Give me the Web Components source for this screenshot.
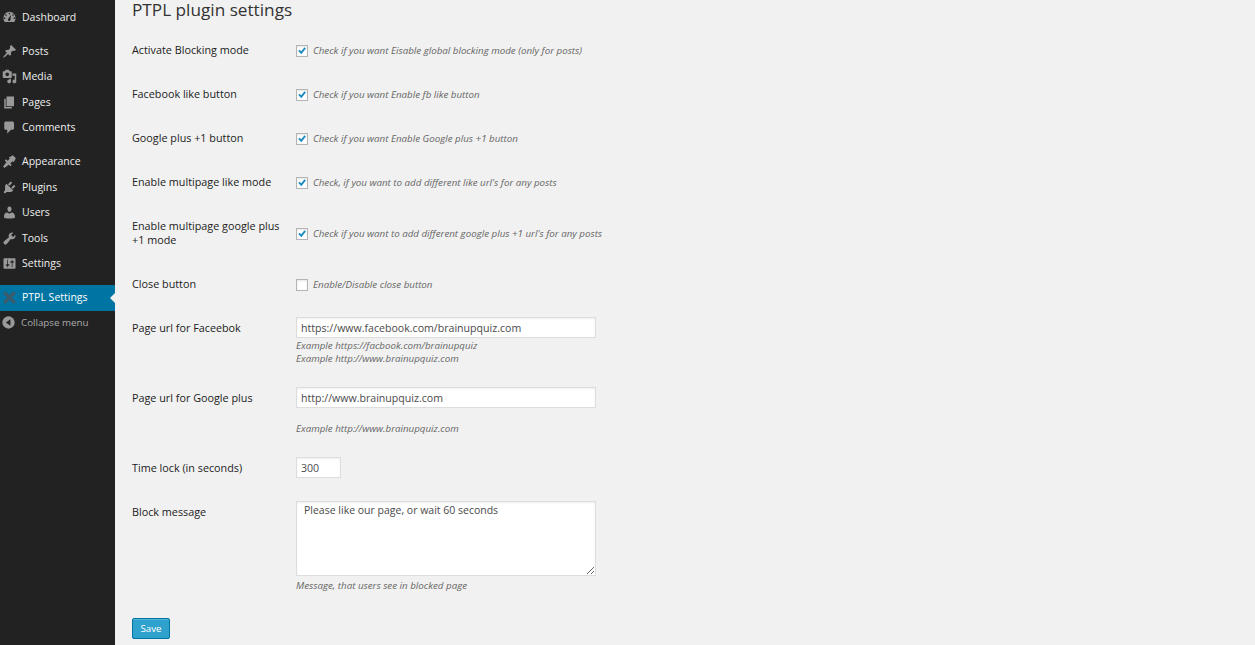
<!DOCTYPE html>
<html lang="en"><head><meta charset="utf-8"><title>PTPL plugin settings</title>
<style>
html,body{margin:0;height:100%;background:#f1f1f1;overflow:hidden}
body{font-family:"Open Sans",sans-serif;font-size:10.5px;color:#444}
</style></head>
<body>
<wp-shell>
  <wp-sidebar slot="side">
    <wp-item icon="dashboard" style="margin-top:4.5px">Dashboard</wp-item>
    <wp-sep></wp-sep>
    <wp-item icon="posts">Posts</wp-item>
    <wp-item icon="media">Media</wp-item>
    <wp-item icon="pages">Pages</wp-item>
    <wp-item icon="comments">Comments</wp-item>
    <wp-sep></wp-sep>
    <wp-item icon="appearance">Appearance</wp-item>
    <wp-item icon="plugins">Plugins</wp-item>
    <wp-item icon="users">Users</wp-item>
    <wp-item icon="tools">Tools</wp-item>
    <wp-item icon="settings">Settings</wp-item>
    <wp-sep></wp-sep>
    <wp-item icon="cross" current>PTPL Settings</wp-item>
    <wp-collapse>Collapse menu</wp-collapse>
  </wp-sidebar>
  <ptpl-settings>
    <set-row label="Activate Blocking mode" h="44"><set-check checked>Check if you want Eisable global blocking mode (only for posts)</set-check></set-row>
    <set-row label="Facebook like button" h="44"><set-check checked>Check if you want Enable fb like button</set-check></set-row>
    <set-row label="Google plus +1 button" h="44"><set-check checked>Check if you want Enable Google plus +1 button</set-check></set-row>
    <set-row label="Enable multipage like mode" h="44"><set-check checked>Check, if you want to add different like url's for any posts</set-check></set-row>
    <set-row label="Enable multipage google plus +1 mode" h="58"><set-check checked style="margin-top:12px">Check if you want to add different google plus +1 url's for any posts</set-check></set-row>
    <set-row label="Close button" h="44"><set-check>Enable/Disable close button</set-check></set-row>
    <set-row label="Page url for Faceebok" h="70"><set-text value="https://www.facebook.com/brainupquiz.com" w="300"></set-text><set-desc style="margin-top:1px">Example https://facbook.com/brainupquiz</set-desc><set-desc>Example http://www.brainupquiz.com</set-desc></set-row>
    <set-row label="Page url for Google plus" h="70"><set-text value="http://www.brainupquiz.com" w="300"></set-text><set-desc style="margin-top:14px">Example http://www.brainupquiz.com</set-desc></set-row>
    <set-row label="Time lock (in seconds)" h="44"><set-text value="300" w="45"></set-text></set-row>
    <set-row label="Block message" h="106"><set-area>Please like our page, or wait 60 seconds</set-area><set-desc style="margin-top:3px">Message, that users see in blocked page</set-desc></set-row>
    <set-save>Save</set-save>
  </ptpl-settings>
</wp-shell>
<script>
const ICONS={
dashboard:'<path fill-rule="evenodd" d="M3.760 16h12.480C17.340 14.570 18 12.790 18 10.860c0-4.730-3.810-8.550-8-8.550s-8 3.820-8 8.550c0 1.930.66 3.710 1.760 5.140zM10 3.700a1.100 1.100 0 1 1 0 2.200 1.100 1.100 0 0 1 0-2.200zM5.300 5.700a1.100 1.100 0 1 1 0 2.200 1.100 1.100 0 0 1 0-2.200zM14.700 5.700a1.100 1.100 0 1 1 0 2.200 1.100 1.100 0 0 1 0-2.200zM3.500 9.800a1.100 1.100 0 1 1 0 2.200 1.100 1.100 0 0 1 0-2.200zM16.500 9.800a1.100 1.100 0 1 1 0 2.200 1.100 1.100 0 0 1 0-2.200zM12.300 6.200l-1 5.800a1.800 1.800 0 1 1-2.700-.8z"/>',
posts:'<path d="M10.440 3.020l1.820-1.820 6.360 6.350-1.830 1.820c-1.050-.68-2.480-.57-3.410.36l-.75.75c-.92.93-1.040 2.350-.35 3.410l-1.830 1.820-2.410-2.410-2.800 2.790c-.42.42-3.380 2.710-3.800 2.290s1.860-3.390 2.280-3.810l2.790-2.790L4.100 9.360l1.830-1.820c1.050.69 2.480.57 3.400-.36l.75-.75c.93-.92 1.050-2.350.36-3.410z"/>',
media:'<path fill-rule="evenodd" d="M13 11V4c0-.55-.45-1-1-1h-1.670L9 1H5L3.670 3H2c-.55 0-1 .45-1 1v7c0 .55.45 1 1 1h10c.55 0 1-.45 1-1zM7 4.500c1.380 0 2.500 1.120 2.500 2.500S8.380 9.500 7 9.500 4.500 8.380 4.500 7 5.620 4.500 7 4.500z"/><path d="M14 6h5v10.500c0 1.380-1.120 2.500-2.500 2.500S14 17.880 14 16.500s1.120-2.500 2.500-2.500c.17 0 .34.020.5.050V9h-3V6zm-4 8.050V13h2v3.500c0 1.380-1.120 2.500-2.500 2.500S7 17.880 7 16.500 8.120 14 9.500 14c.17 0 .34.020.5.050z"/>',
pages:'<path d="M6 15V2h10v13H6zm-1 1h8v2H3V5h2v11z"/>',
comments:'<path d="M5 2h9c1.100 0 2 .9 2 2v7c0 1.100-.9 2-2 2h-2l-5 5v-5H5c-1.100 0-2-.9-2-2V4c0-1.100.9-2 2-2z"/>',
appearance:'<path d="M9 4.500 14.500 1.500 18.500 5.500 15.500 11 14 9.500 11 12.500 13 14.500 11.200 16.300 9 14.200 3.200 18.500 1.500 16.800 5.800 11 3.700 8.800 5.500 7 7.500 9 10.500 6z"/>',
plugins:'<path d="M13.110 4.360L9.870 7.600 8 5.730l3.240-3.240c.35-.34 1.050-.2 1.560.32.520.51.660 1.210.31 1.550zm-8 1.770l.91-1.120 9.010 9.010-1.190.84c-.71.710-2.630 1.160-3.820 1.160H6.140L4.900 17.260c-.59.590-1.540.59-2.120 0-.59-.58-.59-1.530 0-2.120l1.240-1.240v-3.880c0-1.130.4-3.190 1.090-3.890zm7.260 3.970l3.240-3.240c.34-.35 1.040-.21 1.550.31.520.51.660 1.210.31 1.550l-3.240 3.250z"/>',
users:'<path d="M10 9.250c-2.270 0-2.730-3.440-2.730-3.440C7 4.020 7.820 2 9.970 2c2.160 0 2.980 2.020 2.710 3.810 0 0-.41 3.440-2.680 3.440zm0 2.570L12.720 10c2.390 0 4.520 2.330 4.520 4.530v2.490s-3.650 1.130-7.240 1.130c-3.650 0-7.240-1.130-7.240-1.130v-2.490c0-2.250 1.940-4.480 4.150-4.480z"/>',
tools:'<path d="M16.680 9.770c-1.340 1.340-3.300 1.670-4.950.99l-5.410 6.520c-.99.99-2.590.99-3.580 0s-.99-2.590 0-3.570l6.520-5.420c-.68-1.650-.35-3.610.99-4.950 1.280-1.280 3.120-1.620 4.720-1.060l-2.890 2.890 2.820 2.820 2.860-2.860c.56 1.600.22 3.440-1.080 4.640z"/>',
settings:'<path fill-rule="evenodd" d="M18 16V4c0-.55-.45-1-1-1H3c-.55 0-1 .45-1 1v12c0 .55.45 1 1 1h14c.55 0 1-.45 1-1zM8 11h1c.55 0 1 .45 1 1s-.45 1-1 1H8v1.500c0 .28-.22.5-.5.5s-.5-.22-.5-.5V13H6c-.55 0-1-.45-1-1s.45-1 1-1h1V5.500c0-.28.22-.5.5-.5s.5.22.5.5V11zm5-2h-1c-.55 0-1-.45-1-1s.45-1 1-1h1V5.500c0-.28.22-.5.5-.5s.5.22.5.5V7h1c.55 0 1 .45 1 1s-.45 1-1 1h-1v5.500c0 .28-.22.5-.5.5s-.5-.22-.5-.5V9z"/>',
cross:'<path d="M4.500 1.500 10 7l5.500-5.500 3 3L13 10l5.500 5.500-3 3L10 13l-5.500 5.500-3-3L7 10 1.500 4.500z"/>'};

function def(name,css,html){
  customElements.define(name,class extends HTMLElement{
    connectedCallback(){
      if(this.shadowRoot)return;
      const r=this.attachShadow({mode:'open'});
      const h=typeof html==='function'?html(this):html;
      r.innerHTML='<style>'+css+'</style>'+h;
    }
  });
}
def('wp-shell',':host{display:flex;height:100vh;overflow:hidden}','<slot name="side"></slot><slot></slot>');
def('wp-sidebar',':host{display:block;flex:none;width:115px;height:100%;background:#222;box-sizing:border-box}','<slot></slot>');
def('wp-sep',':host{display:block;height:8.500px}','');
def('wp-item',
 `:host{display:flex;align-items:center;position:relative;height:25.500px;color:#eee;font-size:10.500px;line-height:25.500px;white-space:nowrap}
  :host([current]){background:#0074a2;color:#fff;font-weight:400}
  svg{flex:none;width:15px;height:15px;margin:0 5px 0 2px;fill:#999}
  :host([current]) svg{fill:#3c5a6a}
  :host([current])::after{content:"";position:absolute;right:0;top:50%;margin-top:-5px;border:5px solid transparent;border-right-color:#f1f1f1;border-left:0}`,
 e=>`<svg viewBox="0 0 20 20" aria-hidden="true">${ICONS[e.getAttribute('icon')]}</svg><slot></slot>`);
def('wp-collapse',
 `:host{display:flex;align-items:center;height:24px;color:#aaa;font-size:9.750px;white-space:nowrap}
  svg{flex:none;width:13px;height:13px;margin:0 6px 0 2px}`,
 `<svg viewBox="0 0 20 20" aria-hidden="true"><circle cx="10" cy="10" r="9.500" fill="#999"/><path d="M13 5v10L6 10z" fill="#222"/></svg><slot></slot>`);
def('ptpl-settings',
 `:host{display:block;flex:1;min-width:0;padding:0 0 0 17px}
  h2{margin:0 0 11px;height:28px;font:400 17.200px/19px "Open Sans",sans-serif;color:#333}`,
 `<h2>PTPL plugin settings</h2><slot></slot>`);
def('set-row',
 `:host{display:flex;align-items:flex-start;box-sizing:border-box}
  .l{flex:none;width:150px;margin-right:14px;padding-top:4px;font-weight:500;font-size:10.800px;line-height:14px;color:#222}
  .c{flex:none;width:320px}`,
 e=>{e.style.height=e.getAttribute('h')+'px';return `<div class="l">${e.getAttribute('label')}</div><div class="c"><slot></slot></div>`});
def('set-check',
 `:host{display:flex;align-items:center;height:13px;margin-top:5px;font-size:9.750px;font-style:italic;color:#666;white-space:nowrap}
  input{appearance:none;-webkit-appearance:none;flex:none;box-sizing:border-box;width:12px;height:12px;margin:0;background:#fff;border:1px solid #b4b4b4;box-shadow:inset 0 1px 2px rgba(0,0,0,.1)}
  svg{position:absolute;left:1px;top:1px;width:10px;height:10px;fill:#1e8cbe}
  .b{position:relative;display:flex;flex:none;margin:1px 5px 0 0}`,
 e=>`<span class="b"><input type="checkbox" ${e.hasAttribute('checked')?'checked':''}>${e.hasAttribute('checked')?'<svg viewBox="0 0 12 12" aria-hidden="true"><path d="M1.500 6 3.200 4.500 5 6.300 9 1.500 10.700 3 5.200 10z"/></svg>':''}</span><slot></slot>`);
def('set-text',
 `:host{display:block}
  input{display:block;box-sizing:border-box;height:21px;margin:0;padding:0 4px;font:400 10.600px "Open Sans",sans-serif;color:#4a4a4a;background:#fff;border:1px solid #ddd;outline:0;box-shadow:inset 0 1px 2px rgba(0,0,0,.07)}`,
 e=>`<input type="text" value="${e.getAttribute('value')}" style="width:${e.getAttribute('w')}px">`);
def('set-area',
 `:host{display:block}
  textarea{display:block;box-sizing:border-box;width:300px;height:75px;margin:0;padding:1.500px 7px;font:400 10.500px/1.300 "Open Sans",sans-serif;color:#4a4a4a;background:#fff;border:1px solid #ddd;outline:0;box-shadow:inset 0 1px 2px rgba(0,0,0,.07)}`,
 e=>`<textarea>${e.textContent}</textarea>`);
def('set-desc',
 `:host{display:block;font-size:9.750px;font-style:italic;line-height:13px;color:#666;white-space:nowrap}`,'<slot></slot>');
def('set-save',
 `:host{display:block;margin-top:11px}
  button{display:block;box-sizing:border-box;width:38px;height:21px;padding:0;font:400 9.750px "Open Sans",sans-serif;color:#fff;background:#2ea2cc;border:1px solid #0074a2;border-radius:2px;box-shadow:inset 0 1px 0 rgba(120,200,230,.5)}`,
 `<button type="button"><slot></slot></button>`);
</script>
</body></html>
